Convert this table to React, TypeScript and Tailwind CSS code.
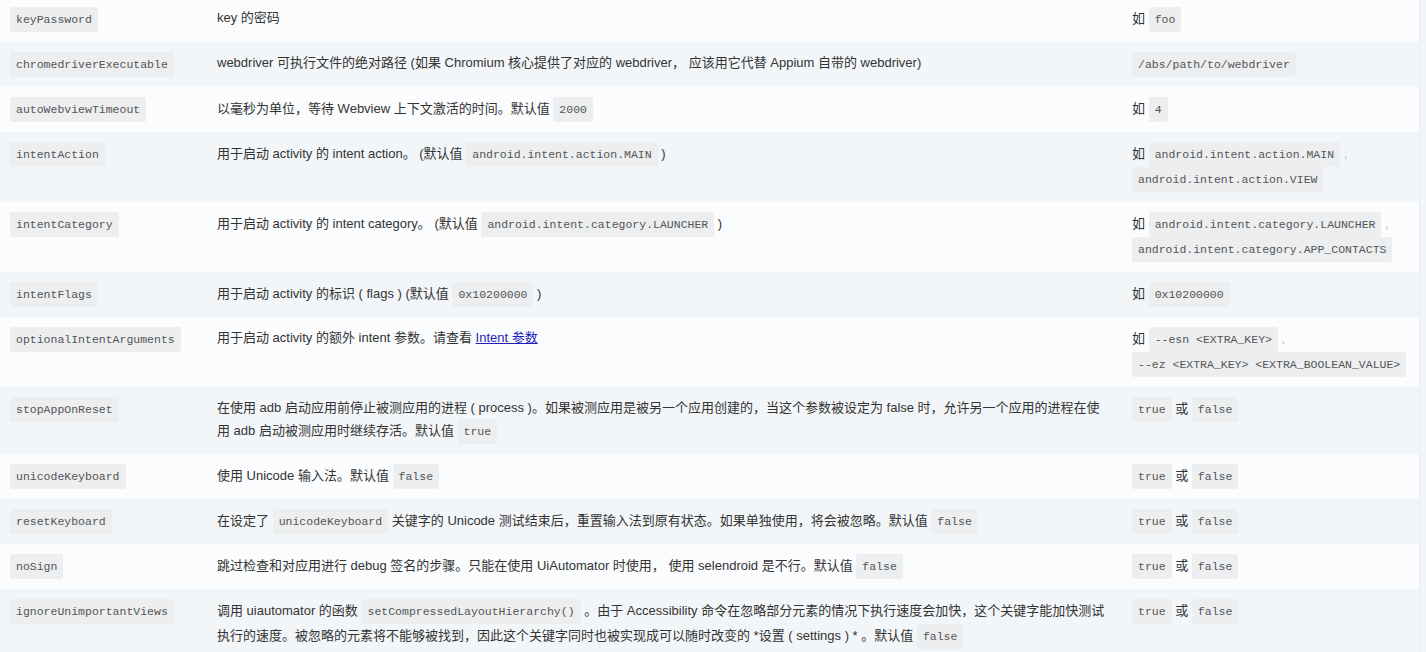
import React from "react";

const C = ({ children }: { children: React.ReactNode }) => (
  <code className="inline-block rounded-[2px] bg-[#eceef0] px-[6px] py-[3px] align-middle font-['Liberation_Mono','Courier_New',monospace] text-[11.5px] leading-[19px] text-[#555]">
    {children}
  </code>
);

type Row = { k: string; d: React.ReactNode; e: React.ReactNode };

const tf = (
  <>
    <C>true</C> 或 <C>false</C>
  </>
);

const rows: Row[] = [
  { k: "keyPassword", d: <>key 的密码</>, e: <>如 <C>foo</C></> },
  {
    k: "chromedriverExecutable",
    d: <>webdriver 可执行文件的绝对路径 (如果 Chromium 核心提供了对应的 webdriver， 应该用它代替 Appium 自带的 webdriver)</>,
    e: <C>/abs/path/to/webdriver</C>,
  },
  {
    k: "autoWebviewTimeout",
    d: <>以毫秒为单位，等待 Webview 上下文激活的时间。默认值 <C>2000</C></>,
    e: <>如 <C>4</C></>,
  },
  {
    k: "intentAction",
    d: <>用于启动 activity 的 intent action。 (默认值 <C>android.intent.action.MAIN</C> )</>,
    e: (
      <>
        如 <C>android.intent.action.MAIN</C> <span className="text-[#bbb]">,</span> <C>android.intent.action.VIEW</C>
      </>
    ),
  },
  {
    k: "intentCategory",
    d: <>用于启动 activity 的 intent category。 (默认值 <C>android.intent.category.LAUNCHER</C> )</>,
    e: (
      <>
        如 <C>android.intent.category.LAUNCHER</C> <span className="text-[#bbb]">,</span> <C>android.intent.category.APP_CONTACTS</C>
      </>
    ),
  },
  {
    k: "intentFlags",
    d: <>用于启动 activity 的标识 ( flags ) (默认值 <C>0x10200000</C> )</>,
    e: <>如 <C>0x10200000</C></>,
  },
  {
    k: "optionalIntentArguments",
    d: (
      <>
        用于启动 activity 的额外 intent 参数。请查看{" "}
        <a href="#" className="text-[#1f1fb8] underline">
          Intent 参数
        </a>
      </>
    ),
    e: (
      <>
        如 <C>--esn &lt;EXTRA_KEY&gt;</C> <span className="text-[#bbb]">,</span> <C>--ez &lt;EXTRA_KEY&gt; &lt;EXTRA_BOOLEAN_VALUE&gt;</C>
      </>
    ),
  },
  {
    k: "stopAppOnReset",
    d: (
      <>
        在使用 adb 启动应用前停止被测应用的进程 ( process )。如果被测应用是被另一个应用创建的，当这个参数被设定为 false 时，允许另一个应用的进程在使用 adb 启动被测应用时继续存活。默认值 <C>true</C>
      </>
    ),
    e: tf,
  },
  { k: "unicodeKeyboard", d: <>使用 Unicode 输入法。默认值 <C>false</C></>, e: tf },
  {
    k: "resetKeyboard",
    d: (
      <>
        在设定了 <C>unicodeKeyboard</C> 关键字的 Unicode 测试结束后，重置输入法到原有状态。如果单独使用，将会被忽略。默认值 <C>false</C>
      </>
    ),
    e: tf,
  },
  {
    k: "noSign",
    d: <>跳过检查和对应用进行 debug 签名的步骤。只能在使用 UiAutomator 时使用， 使用 selendroid 是不行。默认值 <C>false</C></>,
    e: tf,
  },
  {
    k: "ignoreUnimportantViews",
    d: (
      <>
        调用 uiautomator 的函数 <C>setCompressedLayoutHierarchy()</C> 。由于 Accessibility 命令在忽略部分元素的情况下执行速度会加快，这个关键字能加快测试执行的速度。被忽略的元素将不能够被找到，因此这个关键字同时也被实现成可以随时改变的 *设置 ( settings ) * 。默认值 <C>false</C>
      </>
    ),
    e: tf,
  },
];

export default function App() {
  return (
    <div className="h-[652px] w-[1426px] overflow-hidden bg-[#f3f6f9] font-['Liberation_Sans','Noto_Sans_CJK_SC',sans-serif] text-[13px] leading-[22px] text-[#333]">
      <div className="-mt-[3px] w-[1420px] border-r border-[#e8ecef]">
        {rows.map((r, i) => (
          <div
            key={r.k}
            className={`flex items-start ${i % 2 === 0 ? "bg-[#fbfcfd]" : "bg-[#f3f6f8]"}`}
          >
            <div className="w-[207px] shrink-0 py-[10px] pl-[10px] pr-[10px]">
              <C>{r.k}</C>
            </div>
            <div className="w-[925px] shrink-0 py-[10px] pl-[10px] pr-[24px]">{r.d}</div>
            <div className="min-w-0 flex-1 py-[10px] pr-[10px]">{r.e}</div>
          </div>
        ))}
      </div>
    </div>
  );
}
